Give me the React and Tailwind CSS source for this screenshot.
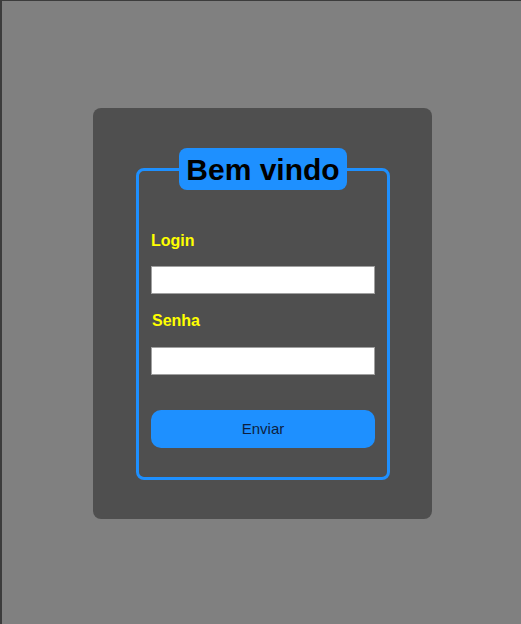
export default function App() {
  return (
    <div className="h-[624px] bg-[#808080] border-l-2 border-t border-[#3c3c3c] flex items-center justify-center font-['Liberation_Sans',Arial,sans-serif]">
      <div className="ml-[2px] mt-[2px] w-[339px] h-[411px] bg-[#4f4f4f] rounded-[8px] pl-[43px] pr-[42px] pt-[40px]">
        <fieldset className="border-[3px] border-[#1e90ff] rounded-[8px] px-3 pb-[29px]">
          <legend className="mx-auto bg-[#1e90ff] rounded-[8px] px-[7px] h-[42px] text-[30px] leading-[43px] font-bold text-black">
            Bem vindo
          </legend>
          <form className="flex flex-col" onSubmit={(e) => e.preventDefault()}>
            <label className="mt-[42px] text-[16px] leading-[18px] font-bold text-[#ffff00]">Login</label>
            <input type="text" className="mt-[16px] h-[28px] w-full bg-white border border-[#a0a0a0]" />
            <label className="mt-[18px] ml-[1px] text-[16px] leading-[18px] font-bold text-[#ffff00]">Senha</label>
            <input type="password" className="mt-[17px] h-[28px] w-full bg-white border border-[#a0a0a0]" />
            <button type="submit" className="mt-[35px] h-[38px] w-full bg-[#1e90ff] rounded-[10px] text-[15px] text-[#0d1f3f]">
              Enviar
            </button>
          </form>
        </fieldset>
      </div>
    </div>
  );
}
